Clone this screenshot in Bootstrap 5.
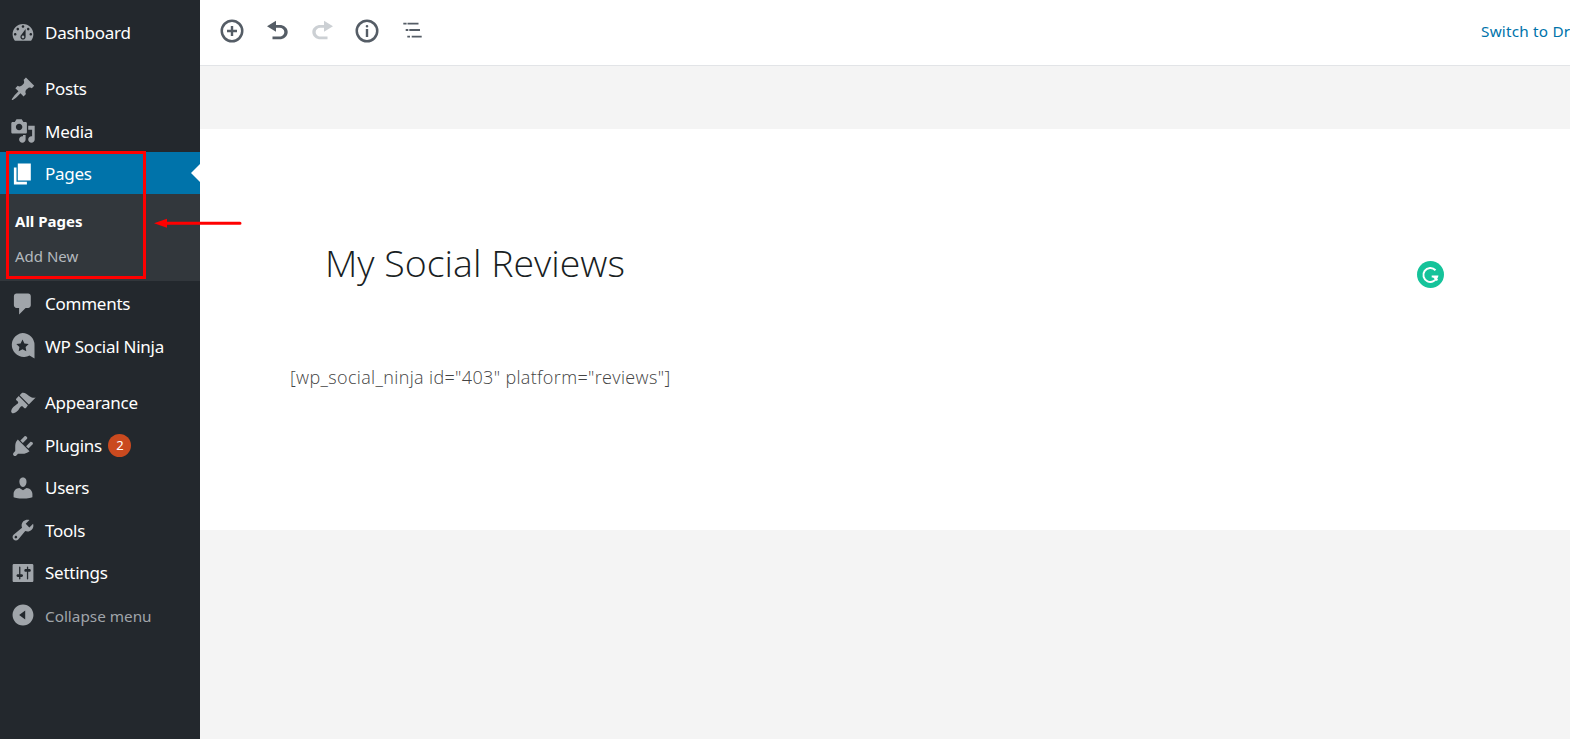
<!DOCTYPE html>
<html lang="en">
<head>
<meta charset="utf-8">
<title>My Social Reviews</title>
<link href="https://cdn.jsdelivr.net/npm/bootstrap@5.3.0/dist/css/bootstrap.min.css" rel="stylesheet">
<style>
html,body{height:100%;overflow:hidden}
body{font-family:"Noto Sans","Open Sans",sans-serif;background:#f4f4f4;position:relative}
.wp-side{width:200px;height:739px;background:#23282d;padding-top:11px;flex:none}
.wp-item{height:42.4px;color:#fff;font-size:17px;letter-spacing:-.25px;padding:1px 0 0 9.5px;gap:9.5px;text-decoration:none}
.wp-item svg{width:26px;height:26px;fill:#a0a5aa;flex:none}
.wp-item.cur{background:#0073aa;position:relative;height:42px}
.wp-item.cur svg{fill:#fff}
.wp-item.cur::after{content:"";position:absolute;right:0;top:12px;border:9px solid transparent;border-right-color:#fff;border-left:0}
.wp-gap{height:14px}
.wp-gap2{height:14.5px}
.wp-sub{background:#32373c;height:87px;padding:10px 0 0 15px;margin-bottom:1px}
.wp-sub .wp-sublink{display:block;height:35px;line-height:35px;font-size:15px;color:#b4b9be;text-decoration:none}
.wp-sub .wp-sublink.on{color:#fff;font-weight:700}
.wp-pill{width:23px;height:23px;border-radius:50%;background:#ca4a1f;font-size:13px;margin-left:-3px;letter-spacing:0}
.wp-item.wp-muted{color:#a0a5aa;font-size:15.3px;letter-spacing:0;padding-top:3px}
.wp-item.wp-muted svg{width:22px;height:22px;margin:-2px 2px 0}
.ed-top{height:66px;background:#fff;border-bottom:1px solid #e2e4e7;padding:0 0 4px 20px}
.ed-top svg{fill:#555d66;flex:none}
.ed-ico{width:24px;height:24px;margin-right:21px}
.ed-top .ed-off{fill:#ccd0d4}
.ed-link{margin:2px -20px 0 auto;color:#0073aa;font-size:15.3px;white-space:nowrap;text-decoration:none;letter-spacing:.2px}
.ed-sheet{background:#fff;height:401px;margin-top:63px;padding:110px 0 0 90px}
.ed-title{font-family:"Open Sans","Noto Sans",sans-serif;font-weight:300;font-size:37.5px;line-height:48px;color:#191e23;margin:0 0 0 35px}
.ed-code{font-family:"Open Sans","Noto Sans",sans-serif;font-weight:300;font-size:18px;letter-spacing:.35px;color:#444;margin:78px 0 0;line-height:24px}
.mark-box{position:absolute;left:6px;top:151px;width:140px;height:128px;border:3px solid #f00}
.mark-arrow{position:absolute;left:154px;top:216px}
.gram{position:absolute;left:1416.5px;top:261px;width:27px;height:27px}
</style>
</head>
<body>
<div class="d-flex">
  <nav class="wp-side d-flex flex-column">
    <a class="wp-item d-flex align-items-center"><svg viewBox="0 0 20 20"><path fill-rule="evenodd" d="M3.76 16h12.48c1.1-1.37 1.76-3.11 1.76-5 0-4.42-3.58-8-8-8s-8 3.58-8 8c0 1.89.66 3.63 1.76 5zM10 4c.55 0 1 .45 1 1s-.45 1-1 1-1-.45-1-1 .45-1 1-1zM6 6c.55 0 1 .45 1 1s-.45 1-1 1-1-.45-1-1 .45-1 1-1zm8 0c.55 0 1 .45 1 1s-.45 1-1 1-1-.45-1-1 .45-1 1-1zm-5.37 5.55L12 7v6c0 1.1-.9 2-2 2s-2-.9-2-2c0-.57.24-1.08.63-1.45zM4 10c.55 0 1 .45 1 1s-.45 1-1 1-1-.45-1-1 .45-1 1-1zm12 0c.55 0 1 .45 1 1s-.45 1-1 1-1-.45-1-1 .45-1 1-1zm-5 3c0-.55-.45-1-1-1s-1 .45-1 1 .45 1 1 1 1-.45 1-1z"/></svg>Dashboard</a>
    <div class="wp-gap"></div>
    <a class="wp-item d-flex align-items-center"><svg viewBox="0 0 20 20"><path d="M10.44 3.02l1.82-1.82 6.36 6.35-1.83 1.82c-1.05-.68-2.48-.57-3.41.36l-.75.75c-.92.93-1.04 2.35-.35 3.41l-1.83 1.82-2.41-2.41-2.8 2.79c-.42.42-3.38 2.71-3.8 2.29s1.86-3.39 2.28-3.81l2.79-2.79L4.1 9.36l1.83-1.82c1.05.69 2.48.57 3.4-.36l.75-.75c.93-.92 1.05-2.35.36-3.41z"/></svg>Posts</a>
    <a class="wp-item d-flex align-items-center"><svg viewBox="0 0 20 20"><path fill-rule="evenodd" d="M13 11V4c0-.55-.45-1-1-1h-1.67L9 1H5L3.67 3H2c-.55 0-1 .45-1 1v7c0 .55.45 1 1 1h10c.55 0 1-.45 1-1zM7 4.5c1.38 0 2.5 1.12 2.5 2.5S8.38 9.5 7 9.5 4.5 8.38 4.5 7 5.62 4.5 7 4.5zM14 6h5v10.5c0 1.38-1.12 2.5-2.5 2.5S14 17.88 14 16.5s1.12-2.5 2.5-2.5c.17 0 .34.02.5.05V9h-3V6zm-4 8.05V13h2v3.5c0 1.38-1.12 2.5-2.5 2.5S7 17.88 7 16.5 8.12 14 9.5 14c.17 0 .34.02.5.05z"/></svg>Media</a>
    <a class="wp-item cur d-flex align-items-center"><svg viewBox="0 0 20 20"><path d="M6 15V2h10v13H6zm-1 1h8v2H3V5h2v11z"/></svg>Pages</a>
    <div class="wp-sub">
      <a class="wp-sublink on">All Pages</a>
      <a class="wp-sublink">Add New</a>
    </div>
    <a class="wp-item d-flex align-items-center"><svg viewBox="0 0 20 20"><path d="M5 2h9c1.1 0 2 .9 2 2v7c0 1.1-.9 2-2 2h-2l-5 5v-5H5c-1.1 0-2-.9-2-2V4c0-1.1.9-2 2-2z"/></svg>Comments</a>
    <a class="wp-item d-flex align-items-center"><svg viewBox="0 0 26 26"><path fill-rule="evenodd" d="M12.500 0a12 12 0 0 1 12 12v13.500l-5-3a12 12 0 1 1-7-22.500zM12.500 6.500l1.900 3.900 4.300.6-3.100 3 .7 4.300-3.800-2-3.800 2 .7-4.300-3.100-3 4.300-.6z"/></svg>WP Social Ninja</a>
    <div class="wp-gap2"></div>
    <a class="wp-item d-flex align-items-center"><svg viewBox="0 0 20 20"><path d="M14.48 11.06L7.41 3.99l1.5-1.5c.5-.56 2.3-.47 3.51.32 1.21.8 1.43 1.28 2.91 2.1 1.18.64 2.45 1.26 4.45.85zm-.71.71L6.7 4.7 4.93 6.47c-.39.39-.39 1.02 0 1.41l1.06 1.06c.39.39.39 1.03 0 1.42-.6.6-1.43 1.11-2.21 1.69-.35.26-.7.53-1.01.84-1.43 1.43-2.4 3.56-1.43 4.53.97.97 3.1 0 4.53-1.43.31-.31.58-.66.84-1.01.58-.78 1.09-1.61 1.69-2.21.39-.39 1.03-.39 1.42 0l1.06 1.06c.39.39 1.02.39 1.41 0z"/></svg>Appearance</a>
    <a class="wp-item d-flex align-items-center"><svg viewBox="0 0 20 20"><path d="M13.11 4.36L9.87 7.6 8 5.73l3.24-3.24c.35-.34 1.05-.2 1.56.32.52.51.66 1.21.31 1.55zm-8 1.77l.91-1.12 9.01 9.01-1.19.84c-.71.71-2.63 1.16-3.82 1.16H6.14L4.9 17.26c-.59.59-1.54.59-2.12 0-.59-.58-.59-1.53 0-2.12l1.24-1.24v-3.88c0-1.13.4-3.19 1.09-3.89zm7.26 3.97l3.24-3.24c.34-.35 1.04-.21 1.55.31.52.51.66 1.21.31 1.55l-3.24 3.25z"/></svg>Plugins<span class="wp-pill d-inline-flex align-items-center justify-content-center">2</span></a>
    <a class="wp-item d-flex align-items-center"><svg viewBox="0 0 20 20"><path d="M10 9.250c-2.270 0-2.730-3.440-2.730-3.440C7 4.020 7.820 2 9.970 2c2.160 0 2.980 2.020 2.710 3.810 0 0-.41 3.440-2.680 3.440zm0 2.570L12.720 10c2.390 0 4.520 2.330 4.520 4.530v2.490s-3.650 1.130-7.240 1.130c-3.650 0-7.240-1.130-7.240-1.130v-2.490c0-2.250 1.940-4.480 4.470-4.480z"/></svg>Users</a>
    <a class="wp-item d-flex align-items-center"><svg viewBox="0 0 20 20"><path fill-rule="evenodd" d="M16.68 9.770c-1.340 1.340-3.300 1.670-4.950.99l-5.410 6.520c-.99.99-2.590.99-3.580 0s-.99-2.590 0-3.570l6.520-5.420c-.68-1.650-.35-3.610.99-4.950 1.280-1.280 3.120-1.620 4.720-1.060l-2.890 2.890 2.820 2.820 2.860-2.870c.53 1.580.18 3.390-1.080 4.650zM3.810 16.210c.4.39 1.040.39 1.430 0 .4-.4.4-1.040 0-1.430-.39-.4-1.030-.4-1.430 0-.39.39-.39 1.030 0 1.430z"/></svg>Tools</a>
    <a class="wp-item d-flex align-items-center"><svg viewBox="0 0 20 20"><path fill-rule="evenodd" d="M18 16V4c0-.55-.45-1-1-1H3c-.55 0-1 .45-1 1v12c0 .55.45 1 1 1h14c.55 0 1-.45 1-1zM8 11h1c.55 0 1 .45 1 1s-.45 1-1 1H8v1.500c0 .28-.22.5-.5.5s-.5-.22-.5-.5V13H6c-.55 0-1-.45-1-1s.45-1 1-1h1V5.500c0-.28.22-.5.5-.5s.5.22.5.5V11zm5-2h-1c-.55 0-1-.45-1-1s.45-1 1-1h1V5.500c0-.28.22-.5.5-.5s.5.22.5.5V7h1c.55 0 1 .45 1 1s-.45 1-1 1h-1v5.500c0 .28-.22.5-.5.5s-.5-.22-.5-.5V9z"/></svg>Settings</a>
    <a class="wp-item wp-muted d-flex align-items-center"><svg viewBox="0 0 20 20"><path fill-rule="evenodd" d="M10 .5c5.250 0 9.500 4.250 9.500 9.500s-4.250 9.500-9.500 9.500S.5 15.250.5 10 4.750.5 10 .5zM12 14V6L6.500 10z"/></svg>Collapse menu</a>
  </nav>
  <main class="flex-grow-1 overflow-hidden">
    <div class="ed-top d-flex align-items-center">
      <svg class="ed-ico" viewBox="0 0 24 24"><path fill-rule="evenodd" d="M12 .5a11.500 11.500 0 1 1 0 23 11.500 11.500 0 0 1 0-23zm0 2.500a9 9 0 1 0 0 18 9 9 0 0 0 0-18zm1.200 4v3.800H17v2.400h-3.800V17h-2.400v-3.800H7v-2.400h3.800V7z"/></svg>
      <svg class="ed-ico" viewBox="0 0 24 24"><path d="M14.500 5.900H11V1.700L2 7.200l9 5.500V8.800h3.500c2.700 0 4.800 1.700 4.800 4.100s-2.100 4.500-4.800 4.500H7.500v2.900h7c4.300 0 8.200-3.100 8.200-7.400s-3.900-7-8.200-7z"/></svg>
      <svg class="ed-ico ed-off" viewBox="0 0 24 24"><path d="M10.500 5.900H14V1.700l9 5.500-9 5.500V8.800h-3.500c-2.700 0-4.800 1.700-4.800 4.100s2.100 4.500 4.800 4.500h7v2.900h-7c-4.300 0-8.200-3.100-8.200-7.400s3.900-7 8.200-7z"/></svg>
      <svg class="ed-ico" viewBox="0 0 24 24"><path fill-rule="evenodd" d="M12 .5a11.500 11.500 0 1 1 0 23 11.500 11.500 0 0 1 0-23zm0 2.500a9 9 0 1 0 0 18 9 9 0 0 0 0-18zm-1.200 7h2.400v8h-2.400zM12 6a1.300 1.300 0 1 1 0 2.600 1.300 1.300 0 0 1 0-2.600z"/></svg>
      <svg class="ed-ico" viewBox="0 0 24 24"><path d="M3.300 3.800h3.300v1.800H3.300zM7.500 3.800h11v1.800h-11zM5.700 10.100h2.600v1.800H5.700zM9.300 10.100H20v1.800H9.300zM7.300 16.800H10v1.800H7.300zM11.700 16.800h10v1.800h-10z"/></svg>
      <a class="ed-link">Switch to Draft</a>
    </div>
    <section class="ed-sheet">
      <h1 class="ed-title">My Social Reviews</h1>
      <p class="ed-code">[wp_social_ninja id="403" platform="reviews"]</p>
    </section>
  </main>
</div>
<div class="mark-box"></div>
<svg class="mark-arrow" width="90" height="14" viewBox="0 0 90 14"><path d="M0 7.300l13-4.500v3h73a1.500 1.500 0 0 1 0 3H13v3z" fill="#f00"/></svg>
<svg class="gram" viewBox="0 0 27 27"><circle cx="13.500" cy="13.500" r="13.500" fill="#15c39a"/><path d="M18.500 9.200a7 7 0 1 0 1.700 6.300h-5.500M16.800 15.800l3.600 3.600" fill="none" stroke="#fff" stroke-width="2"/></svg>
</body>
</html>
